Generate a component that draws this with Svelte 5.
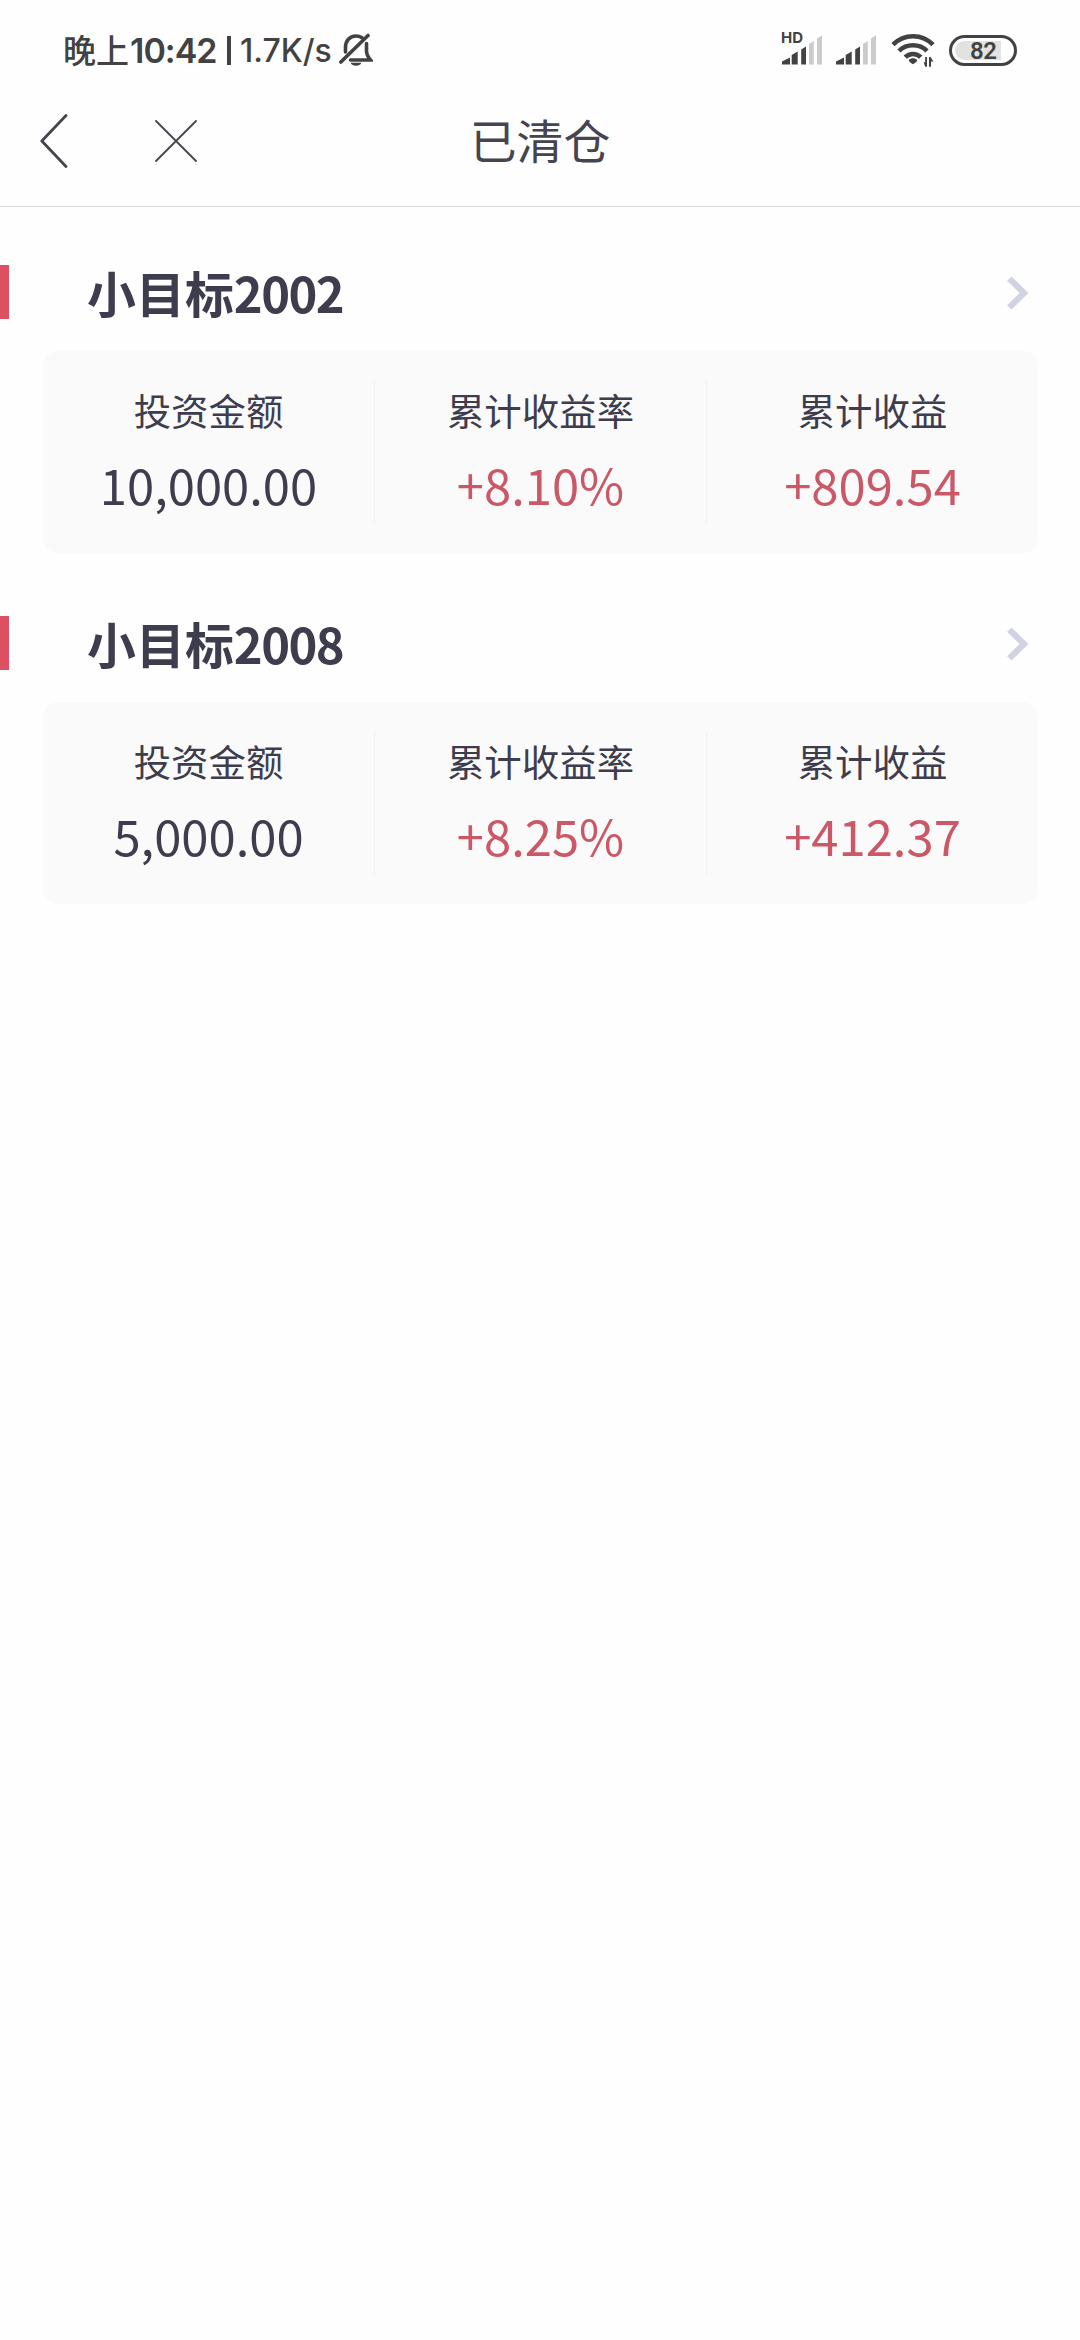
<script>
  const funds = [
    { name: '小目标', code: '2002', amount: '10,000.00', rate: '+8.10%', profit: '+809.54' },
    { name: '小目标', code: '2008', amount: '5,000.00', rate: '+8.25%', profit: '+412.37' }
  ];
</script>

{#snippet signal()}
  <svg class="signal" viewBox="0 0 40 32" width="40" height="32">
    <path class="on" d="M0 30.5V27.5L8 23.5V30.5ZM9.7 30.5V21L15.7 17.5V30.5ZM19.2 30.5V15.5L24 12.5V30.5Z" />
    <path class="off" d="M27 30.5V10L31.8 7V30.5ZM35 30.5V4.5L40 1.2V30.5Z" />
  </svg>
{/snippet}

<div class="screen">
  <div class="status">
    <div class="left">
      <span class="cjk">晚上</span><span class="time">10:42</span>
      <span class="bar"></span>
      <span class="speed">1.7K/s</span>
      <svg class="bell" viewBox="0 0 34 34" width="34" height="34">
        <path d="M6.5 19V14.5C6.5 8 10.5 3 17 3C19.5 3 21.5 3.7 23 4.8M27.5 10.5V18C27.5 22 29 24 31.5 27H11.5" />
        <path d="M1.9 29L29 2.5" />
        <path class="solid" d="M11.5 29.8H22.5C21 33.8 13 33.8 11.5 29.8Z" />
      </svg>
    </div>
    <div class="right">
      <div class="hd">
        {@render signal()}
        <span>HD</span>
      </div>
      {@render signal()}
      <svg class="wifi" viewBox="0 0 44 36" width="44" height="36">
        <path class="arc" d="M2 12.6C13 1.4 31 1.4 42 12.6" />
        <path class="arc" d="M8 19C15.5 11.3 28.5 11.3 36 19" />
        <path class="arc" d="M14.2 25.2C18.5 20.9 25.5 20.9 29.8 25.2" />
        <path class="solid" d="M17.8 28C19.8 25.8 24.2 25.8 26.2 28C26.2 30 23 31.6 22 32.2C21 31.6 17.8 30 17.8 28Z" />
        <path class="solid" d="M36 25V34.8H34.2L32.6 30.2H34.2V25ZM38 25H39.6L42.4 29.6H40V34.8H38Z" />
      </svg>
      <div class="battery"><span>82</span></div>
    </div>
  </div>

  <header>
    <div class="nav">
      <svg viewBox="0 0 28 56" width="28" height="56"><path class="back" d="M26 2.5L1.8 28L26 53.5" /></svg>
      <svg viewBox="0 0 42 42" width="42" height="42"><path class="close" d="M1 1L41 41M41 1L1 41" /></svg>
    </div>
    <h1>已清仓</h1>
    <div></div>
  </header>

  <main>
    {#each funds as fund}
      <section>
        <div class="head">
          <i class="mark"></i>
          <h2>{fund.name}<span>{fund.code}</span></h2>
          <svg viewBox="0 0 22 34" width="22" height="34"><path class="chevron" d="M2.3 2.6L17 17L2.3 31.4" /></svg>
        </div>
        <div class="card">
          <div class="cell"><span class="label">投资金额</span><span class="value">{fund.amount}</span></div>
          <div class="cell"><span class="label">累计收益率</span><span class="value gain">{fund.rate}</span></div>
          <div class="cell"><span class="label">累计收益</span><span class="value gain">{fund.profit}</span></div>
        </div>
      </section>
    {/each}
  </main>
</div>

<style>
  :global(body) { margin: 0; background: #fefefe; }
  .screen {
    width: 1080px; min-height: 2340px; background: #fefefe; color: #3e3d4e;
    font-family: "Noto Sans CJK SC", sans-serif;
  }
  svg { display: block; fill: none; flex: none; }
  .status {
    display: flex; justify-content: space-between; height: 100px; box-sizing: border-box;
    padding: 0 63px 0 63px; color: #424242;
  }
  .left, .right { display: flex; align-items: center; height: 100px; white-space: nowrap; }
  .cjk { font-size: 33px; font-weight: 500; line-height: 48px; width: 67px; margin-top: -2px; }
  .time { font: 600 34px/48px Inter, sans-serif; width: 86px; letter-spacing: -1px; margin-top: 2px; }
  .bar { width: 4px; height: 29px; background: #424242; margin: 0 9px 0 11px; }
  .speed { font: 500 32px/48px Inter, sans-serif; width: 99px; margin-top: 2px; }
  .bell { stroke: #424242; stroke-width: 3.6; stroke-linecap: round; }
  .solid { fill: #424242; stroke: none; }
  .hd { position: relative; margin-right: 14px; }
  .hd span { position: absolute; left: -1px; top: -4px; font: 700 15px/15px Inter, sans-serif; }
  .on { fill: #424242; }
  .off { fill: #cbcbcb; }
  .wifi { margin: 0 14px 0 15px; }
  .arc { stroke: #424242; stroke-width: 4.6; }
  .battery {
    box-sizing: border-box; width: 68px; height: 31px; border: 3px solid #424242; border-radius: 16px;
    padding: 3px 13px 3px 3px;
  }
  .battery span {
    display: block; background: #e2e2e2; border-radius: 10px 0 0 10px; height: 19px;
    font: 600 24px/20px Roboto, sans-serif; text-indent: 15px; letter-spacing: -0.5px;
  }
  header {
    display: grid; grid-template-columns: 1fr auto 1fr; align-items: center; height: 107px;
    box-sizing: border-box; padding: 0 40px 28px; border-bottom: 1px solid #dcdcde;
  }
  .nav { display: flex; align-items: center; gap: 87px; padding-top: 4px; }
  .back { stroke: #45444f; stroke-width: 2.8; stroke-linecap: round; stroke-linejoin: round; }
  .close { stroke: #45444f; stroke-width: 1.8; stroke-linecap: round; }
  h1 { margin: 0; font-size: 46.8px; font-weight: 400; line-height: 60px; color: #45444f; }
  main { padding-top: 58px; }
  section { margin-bottom: 63px; }
  .head { display: flex; align-items: center; height: 54px; margin-bottom: 32px; padding-right: 51px; }
  .mark { width: 9px; height: 54px; background: #dc5061; }
  h2 { flex: 1; margin: 0 0 0 78px; font-size: 48.96px; font-weight: 700; line-height: 54px; }
  h2 span { letter-spacing: -1.6px; }
  .head svg { margin-top: 2px; }
  .chevron { stroke: #d1d3e3; stroke-width: 6.2; }
  .card {
    display: flex; box-sizing: border-box; height: 202px; margin: 0 42px 0 43px; padding: 29px 0;
    background: #fafafb; border-radius: 15px;
  }
  .cell {
    flex: 1; display: flex; flex-direction: column; align-items: center; gap: 14px; padding-top: 6px;
    box-sizing: border-box; white-space: nowrap; border-right: 1px solid #f1f1f3;
  }
  .cell:last-child { border-right: 0; }
  .label { font-size: 37.44px; line-height: 48px; }
  .value { font-size: 48.96px; line-height: 72px; }
  .gain { color: #cb5866; }
</style>
